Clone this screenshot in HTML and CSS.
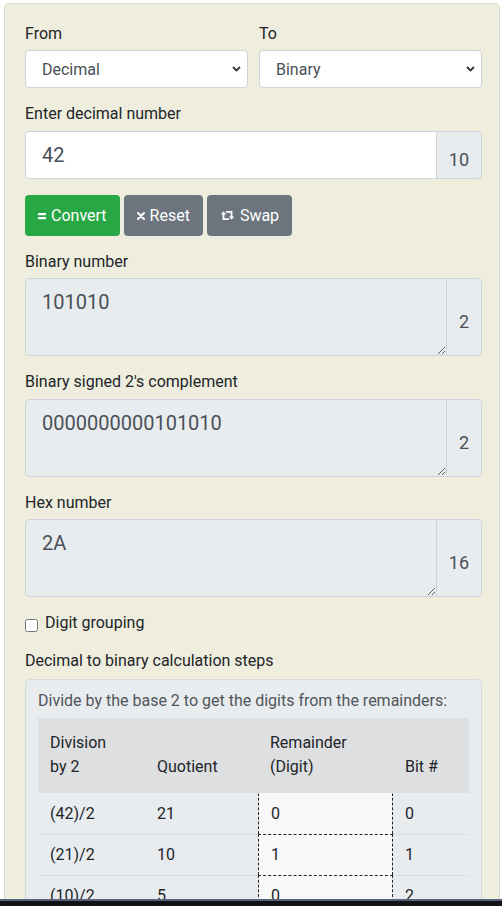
FILE: index.html
```html
<!DOCTYPE html>
<html>
<head>
<meta charset="utf-8">
<link rel="stylesheet" href="styles.css">
</head>
<body>
<div class="card">
  <div class="row2">
    <div class="col">
      <label class="lbl">From</label>
      <div class="sel">
        <select><option>Decimal</option></select>
        <svg class="chev" width="9" height="6" viewBox="0 0 9 6"><path d="M1 1l3.5 3.5L8 1" stroke="#333" stroke-width="1.8" fill="none"/></svg>
      </div>
    </div>
    <div class="col">
      <label class="lbl">To</label>
      <div class="sel">
        <select><option>Binary</option></select>
        <svg class="chev" width="9" height="6" viewBox="0 0 9 6"><path d="M1 1l3.5 3.5L8 1" stroke="#333" stroke-width="1.8" fill="none"/></svg>
      </div>
    </div>
  </div>

  <div class="group g-input">
    <label class="lbl mb5">Enter decimal number</label>
    <div class="ig">
      <input class="inp" type="text" value="42">
      <span class="addon">10</span>
    </div>
  </div>

  <div class="btns">
    <button class="btn btn-green">
      <svg width="8" height="8" viewBox="0 0 8 8"><rect x="0" y="1" width="8" height="2.2" fill="#fff"/><rect x="0" y="5" width="8" height="2.2" fill="#fff"/></svg>
      Convert
    </button>
    <button class="btn btn-gray">
      <svg width="8" height="8" viewBox="0 0 8 8"><path d="M1 1L7 7M7 1L1 7" stroke="#fff" stroke-width="2" stroke-linecap="round"/></svg>
      Reset
    </button>
    <button class="btn btn-gray">
      <svg width="15" height="11" viewBox="0 0 15 11"><path d="M9 9.2H3.5V3.8M6 1.8H11.5V7.2" stroke="#fff" stroke-width="1.8" fill="none"/><path d="M0.8 4.4L3.5 1.2 6.2 4.4Z M8.8 6.6L11.5 9.8 14.2 6.6Z" fill="#fff"/></svg>
      Swap
    </button>
  </div>

  <div class="group">
    <label class="lbl">Binary number</label>
    <div class="ig">
      <textarea class="ta" rows="2" readonly>101010</textarea>
      <span class="addon">2</span>
    </div>
  </div>

  <div class="group">
    <label class="lbl mb5">Binary signed 2's complement</label>
    <div class="ig">
      <textarea class="ta" rows="2" readonly>0000000000101010</textarea>
      <span class="addon">2</span>
    </div>
  </div>

  <div class="group">
    <label class="lbl">Hex number</label>
    <div class="ig">
      <textarea class="ta" rows="2" readonly>2A</textarea>
      <span class="addon">16</span>
    </div>
  </div>

  <div class="group">
    <label class="check"><input type="checkbox"><span>Digit grouping</span></label>
  </div>

  <label class="lbl mb6">Decimal to binary calculation steps</label>
  <div class="steps">
    <div class="steps-intro">Divide by the base 2 to get the digits from the remainders:</div>
    <table class="tbl">
      <colgroup><col class="c1"><col class="c2"><col class="c3"><col></colgroup>
      <thead>
        <tr><th>Division<br>by 2</th><th>Quotient</th><th><span class="l18">Remainder</span><br>(Digit)</th><th>Bit #</th></tr>
      </thead>
      <tbody>
        <tr class="first"><td>(42)/2</td><td>21</td><td class="rem">0</td><td>0</td></tr>
        <tr><td>(21)/2</td><td>10</td><td class="rem">1</td><td>1</td></tr>
        <tr><td>(10)/2</td><td>5</td><td class="rem">0</td><td>2</td></tr>
        <tr><td>(5)/2</td><td>2</td><td class="rem">1</td><td>3</td></tr>
        <tr><td>(2)/2</td><td>1</td><td class="rem">0</td><td>4</td></tr>
        <tr><td>(1)/2</td><td>0</td><td class="rem">1</td><td>5</td></tr>
      </tbody>
    </table>
  </div>
</div>
<div class="taskbar"></div>
</body>
</html>
```
FILE: styles.css
```css
* { box-sizing: border-box; }
html, body { margin: 0; padding: 0; background: #fff; }
body {
  font-family: Roboto, "Liberation Sans", sans-serif;
  font-size: 16px;
  line-height: 24px;
  color: #212529;
}
.card {
  margin: 3px 0 0 4px;
  width: 496px;
  background: #efedde;
  border: 1px solid #dcdbd0;
  border-radius: 5px;
  padding: 18px 17px 40px 20px;
}
.row2 {
  display: grid;
  grid-template-columns: 1fr 1fr;
  column-gap: 11px;
  margin-bottom: 14px;
}
.lbl {
  display: block;
  line-height: 24px;
  margin-bottom: 4px;
}
.lbl.mb5 { margin-bottom: 5px; }
.lbl.mb6 { margin-bottom: 6px; }
.sel { position: relative; }
.sel select {
  -webkit-appearance: none;
  appearance: none;
  display: block;
  width: 100%;
  height: 38px;
  border: 1px solid #ced4da;
  border-radius: 4px;
  background: #fff;
  font-family: Roboto, "Liberation Sans", sans-serif;
  font-size: 16px;
  color: #495057;
  padding: 0 16px;
}
.chev {
  position: absolute;
  right: 7px;
  top: 16px;
  pointer-events: none;
}
.group { margin-bottom: 14px; }
.g-input { margin-bottom: 16px; }
.ig { display: flex; }
.inp {
  flex: 1;
  min-width: 0;
  height: 48px;
  border: 1px solid #ced4da;
  border-radius: 4px 0 0 4px;
  background: #fff;
  font-family: Roboto, "Liberation Sans", sans-serif;
  font-size: 20px;
  color: #495057;
  padding: 0 16px;
  outline: none;
}
.ta {
  flex: 1;
  min-width: 0;
  height: 78px;
  border: 1px solid #ced4da;
  border-radius: 4px 0 0 4px;
  background: #e9ecef;
  font-family: Roboto, "Liberation Sans", sans-serif;
  font-size: 20px;
  line-height: 30px;
  color: #495057;
  padding: 8px 16px;
  resize: vertical;
  outline: none;
  overflow: hidden;
}
.addon {
  display: flex;
  align-items: center;
  margin-left: -1px;
  padding: 9px 12px 0;
  background: #e9ecef;
  border: 1px solid #ced4da;
  border-radius: 0 4px 4px 0;
  font-size: 18px;
  color: #495057;
}
.btns {
  display: flex;
  gap: 4px;
  margin-bottom: 14px;
}
.btn {
  display: inline-flex;
  align-items: center;
  gap: 5px;
  height: 41px;
  padding: 0 13px;
  border: 0;
  border-radius: 4px;
  font-family: Roboto, "Liberation Sans", sans-serif;
  font-size: 16px;
  color: #fff;
}
.btn-green { background: #28a745; }
.btn-gray { background: #6c757d; }
.check {
  display: flex;
  align-items: center;
  gap: 7px;
  line-height: 24px;
}
.check input {
  margin: 4px 0 0 0;
  width: 13px;
  height: 13px;
}
.steps {
  background: #e9ecef;
  border: 1px solid #d6dade;
  border-radius: 4px;
  padding: 9px 12px 0;
}
.steps-intro {
  color: #50555a;
  margin-bottom: 5px;
}
.tbl {
  width: 100%;
  table-layout: fixed;
  border-collapse: separate;
  border-spacing: 0;
}
.tbl col.c1 { width: 107px; }
.tbl col.c2 { width: 113px; }
.tbl col.c3 { width: 135px; }
.tbl th {
  background: #dedfe0;
  font-weight: normal;
  text-align: left;
  vertical-align: bottom;
  padding: 13px 12px 12px;
  border-bottom: 2px solid #dedfe0;
}
.l18 { display: inline-block; line-height: 18px; }
.tbl td {
  padding: 8px 12px;
  border-top: 1px solid #dadee2;
  vertical-align: top;
}
.tbl tr.first td { border-top-color: #e9ecef; }
.tbl td.rem {
  background: #f8f8f8;
  border-left: 1px dashed #222;
  border-right: 1px dashed #222;
  border-top: 1px dashed #222;
}
.tbl tr.first td.rem { border-top: 1px solid #f8f8f8; }
.taskbar {
  position: fixed;
  left: 0;
  right: 0;
  bottom: 0;
  height: 7px;
  background: #101216;
  border-top: 2px solid #58627a;
}
```
